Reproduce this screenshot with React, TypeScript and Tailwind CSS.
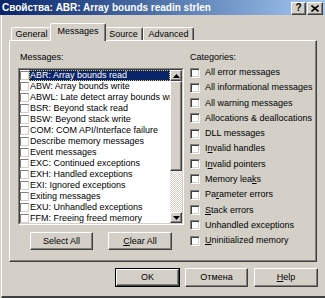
const messages = [
  'ABR: Array bounds read',
  'ABW: Array bounds write',
  'ABWL: Late detect array bounds write',
  'BSR: Beyond stack read',
  'BSW: Beyond stack write',
  'COM: COM API/Interface failure',
  'Describe memory messages',
  'Event messages',
  'EXC: Continued exceptions',
  'EXH: Handled exceptions',
  'EXI: Ignored exceptions',
  'Exiting messages',
  'EXU: Unhandled exceptions',
  'FFM: Freeing freed memory',
];

const categories: [string, string, string][] = [
  ['All error messages', '', ''],
  ['All informational messages', '', ''],
  ['All warning messages', '', ''],
  ['Allocations & deallocations', '', ''],
  ['DLL messages', '', ''],
  ['I', 'n', 'valid handles'],
  ['I', 'n', 'valid pointers'],
  ['Memory lea', 'k', 's'],
  ['Pa', 'r', 'ameter errors'],
  ['', 'S', 'tack errors'],
  ['Unhandled exceptions', '', ''],
  ['', 'U', 'ninitialized memory'],
];

const raised =
  'border border-t-white border-l-white border-r-[#404040] border-b-[#404040] shadow-[inset_-1px_-1px_0_#808080] bg-[#d4d0c8]';
const sunken =
  'border border-t-[#808080] border-l-[#808080] border-r-white border-b-white shadow-[inset_1px_1px_0_#404040,inset_-1px_-1px_0_#d4d0c8] bg-white';

function Tab({ label, w, active }: { label: string; w: string; active?: boolean }) {
  if (active) {
    return (
      <div
        className={`relative z-10 -mx-[2px] -mb-px h-[18px] ${w} flex items-start justify-center pt-[2px] bg-[#d4d0c8] border-l border-t border-t-white border-l-white border-r border-r-[#404040] shadow-[inset_-1px_0_0_#808080] rounded-t-[2px]`}
      >
        {label}
      </div>
    );
  }
  return (
    <div
      className={`h-[13px] ${w} flex items-center justify-center bg-[#d4d0c8] border-l border-t border-t-white border-l-white border-r border-r-[#404040] shadow-[inset_-1px_0_0_#808080] rounded-t-[2px]`}
    >
      {label}
    </div>
  );
}

function Btn({ children, w, def }: { children: React.ReactNode; w: string; def?: boolean }) {
  if (def) {
    return (
      <div className={`${w} h-[19px] border border-black`}>
        <div className={`${raised} h-full flex items-center justify-center`}>{children}</div>
      </div>
    );
  }
  return <div className={`${raised} ${w} h-[19px] flex items-center justify-center`}>{children}</div>;
}

function Arrow({ up }: { up?: boolean }) {
  return (
    <svg width="7" height="4" viewBox="0 0 7 4">
      {up ? <polygon points="0,4 7,4 3.5,0" fill="#000" /> : <polygon points="0,0 7,0 3.5,4" fill="#000" />}
    </svg>
  );
}

export default function App() {
  return (
    <div className="w-[325px] h-[298px] bg-[#d4d0c8] flex flex-col overflow-hidden text-[9px] leading-[11px] text-black font-['Liberation_Sans',Arial,sans-serif]">
      {/* Title bar */}
      <div className="h-[15px] shrink-0 flex items-center bg-gradient-to-r from-[#0a246a] to-[#a6caf0] pl-[2px] pr-[2px]">
        <span className="text-white font-bold text-[10px] leading-[15px] flex-1 whitespace-nowrap">
          Свойства: ABR: Array bounds readin strlen
        </span>
        <div className={`${raised} w-[15px] h-[13px] flex items-center justify-center font-bold text-[10px] leading-none mt-px`}>?</div>
        <div className={`${raised} w-[16px] h-[13px] ml-px flex items-center justify-center mt-px`}>
          <svg width="8" height="7" viewBox="0 0 8 7">
            <path d="M0.5 0.5 L7.5 6.5 M7.5 0.5 L0.5 6.5" stroke="#000" strokeWidth="1.6" />
          </svg>
        </div>
      </div>

      {/* Body */}
      <div className="flex-1 ml-px border-l border-white border-b-2 border-b-[#404040] pt-[8px] pl-[7px]">
        {/* Tabs */}
        <div className="h-[17px] flex items-end pl-[2px]">
          <Tab label="General" w="w-[41px]" />
          <Tab label="Messages" w="w-[56px]" active />
          <Tab label="Source" w="w-[39px]" />
          <Tab label="Advanced" w="w-[51px]" />
        </div>

        {/* Panel */}
        <div className="w-[308px] h-[222px] border border-t-white border-l-white border-r-[#404040] border-b-[#404040] shadow-[inset_-1px_-1px_0_#808080] flex pt-[11px] pl-[8px]">
          <div className="w-[166px] flex flex-col">
            <div className="pl-[2px]">Messages:</div>
            <div className="mt-[5px] h-[157px] w-[166px] border border-t-[#808080] border-l-[#808080] border-r-white border-b-white">
              <div className="h-full border border-t-[#404040] border-l-[#404040] border-r-[#d4d0c8] border-b-[#d4d0c8] bg-white flex">
                <div className="flex-1 overflow-hidden">
                  {messages.map((m, i) => (
                    <div key={m} className="h-[11px] flex items-center whitespace-nowrap">
                      <div className="w-[9px] h-[9px] shrink-0 bg-white border border-t-[#808080] border-l-[#808080] border-r-[#d4d0c8] border-b-[#d4d0c8]" />
                      <div
                        className={`flex-1 h-full flex items-center pl-px overflow-hidden ${
                          i === 0 ? 'bg-[#0a246a] text-white outline outline-1 outline-dotted outline-[#e0d060] -outline-offset-1' : ''
                        }`}
                      >
                        {m}
                      </div>
                    </div>
                  ))}
                </div>
                <div className="w-[12px] flex flex-col shrink-0">
                  <div className={`${raised} h-[11px] flex items-center justify-center`}>
                    <Arrow up />
                  </div>
                  <div className={`${raised} h-[90px]`} />
                  <div className="flex-1 bg-[repeating-conic-gradient(#ffffff_0%_25%,#d4d0c8_0%_50%)] bg-[length:2px_2px]" />
                  <div className={`${raised} h-[11px] flex items-center justify-center`}>
                    <Arrow />
                  </div>
                </div>
              </div>
            </div>
            <div className="mt-[7px] flex pl-[12px] gap-[15px]">
              <div className={`${raised} w-[63px] h-[18px] flex items-center justify-center`}>Select All</div>
              <div className={`${raised} w-[64px] h-[18px] flex items-center justify-center`}>
                <span>
                  <span className="underline">C</span>lear All
                </span>
              </div>
            </div>
          </div>

          <div className="ml-[6px] flex flex-col">
            <div>Categories:</div>
            <div className="mt-[2px] flex flex-col">
              {categories.map(([a, u, b]) => (
                <div key={a + u + b} className="h-[15.27px] flex items-center whitespace-nowrap">
                  <div className={`${sunken} w-[10px] h-[10px] shrink-0`} />
                  <span className="ml-[5px]">
                    {a}
                    {u && <span className="underline">{u}</span>}
                    {b}
                  </span>
                </div>
              ))}
            </div>
          </div>
        </div>

        {/* Dialog buttons */}
        <div className="mt-[6px] ml-[106px] flex">
          <Btn w="w-[65px]" def>
            OK
          </Btn>
          <div className="ml-[5px]">
            <Btn w="w-[63px]">Отмена</Btn>
          </div>
          <div className="ml-[6px]">
            <Btn w="w-[64px]">
              <span>
                <span className="underline">H</span>elp
              </span>
            </Btn>
          </div>
        </div>
      </div>
    </div>
  );
}
